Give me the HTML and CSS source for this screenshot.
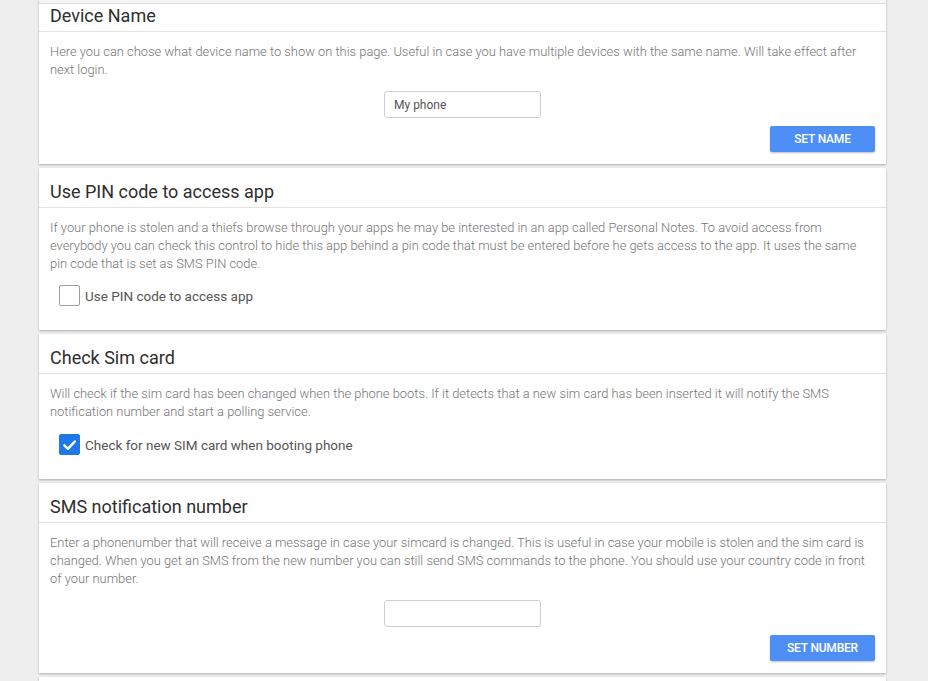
FILE: index.html
```html
<!DOCTYPE html>
<html lang="en">
<head>
<meta charset="utf-8">
<title>Settings</title>
<link rel="stylesheet" href="styles.css">
</head>
<body>
<div class="scroll-edge"></div>
<main class="page">
  <section class="card">
    <h2 class="card-head">Device Name</h2>
    <div class="card-body">
      <p class="desc">Here you can chose what device name to show on this page. Useful in case you have multiple devices with the same name. Will take effect after next login.</p>
      <div class="field-row"><input class="field" type="text" value="My phone"></div>
      <div class="btn-row"><button class="btn">SET NAME</button></div>
    </div>
  </section>

  <section class="card">
    <h2 class="card-head">Use PIN code to access app</h2>
    <div class="card-body check-body">
      <p class="desc">If your phone is stolen and a thiefs browse through your apps he may be interested in an app called Personal Notes. To avoid access from everybody you can check this control to hide this app behind a pin code that must be entered before he gets access to the app. It uses the same pin code that is set as SMS PIN code.</p>
      <label class="check-row"><span class="box"></span><span class="check-label">Use PIN code to access app</span></label>
    </div>
  </section>

  <section class="card">
    <h2 class="card-head">Check Sim card</h2>
    <div class="card-body check-body">
      <p class="desc">Will check if the sim card has been changed when the phone boots. If it detects that a new sim card has been inserted it will notify the SMS notification number and start a polling service.</p>
      <label class="check-row gap14"><span class="box checked"><svg viewBox="0 0 20 20" width="20" height="20"><path d="M4.6 10.4 L8.3 14 L15.6 6.3" fill="none" stroke="#fff" stroke-width="2.6" stroke-linecap="round" stroke-linejoin="round"/></svg></span><span class="check-label">Check for new SIM card when booting phone</span></label>
    </div>
  </section>

  <section class="card">
    <h2 class="card-head">SMS notification number</h2>
    <div class="card-body">
      <p class="desc">Enter a phonenumber that will receive a message in case your simcard is changed. This is useful in case your mobile is stolen and the sim card is changed. When you get an SMS from the new number you can still send SMS commands to the phone. You should use your country code in front of your number.</p>
      <div class="field-row gap12"><input class="field" type="text" value=""></div>
      <div class="btn-row"><button class="btn">SET NUMBER</button></div>
    </div>
  </section>

  <section class="card">
    <h2 class="card-head">&nbsp;</h2>
  </section>
</main>
</body>
</html>
```
FILE: styles.css
```css
html, body {
  margin: 0;
  padding: 0;
  background: #eeeeee;
  font-family: Roboto, "Liberation Sans", Arial, sans-serif;
  overflow: hidden;
}

.scroll-edge {
  position: fixed;
  top: 0;
  left: 39px;
  width: 847px;
  height: 3px;
  background: #f6f6f6;
  border-bottom: 1px solid #dcdcdc;
  z-index: 2;
}

.page {
  display: flex;
  flex-direction: column;
  gap: 4px;
  padding: 0 42px 0 39px;
  margin-top: -8px;
}

.card {
  background: #fff;
  box-shadow: 0 1px 2px rgba(0, 0, 0, 0.28);
}

.card-head {
  margin: 0;
  padding: 13px 11px 4px;
  line-height: 22px;
  font-size: 18px;
  font-weight: 400;
  color: #2e2e2e;
  border-bottom: 1px solid #e3e3e3;
}

.card-body {
  padding: 11px 11px 12px;
}

.check-body {
  padding-bottom: 24px;
}

.desc {
  margin: 0;
  font-size: 12.9px;
  line-height: 18px;
  color: #757575;
  font-weight: 300;
}

.field-row {
  display: flex;
  justify-content: center;
  margin-top: 12px;
}

.field-row.gap12 {
  margin-top: 12px;
}

.field {
  box-sizing: border-box;
  width: 157px;
  height: 27px;
  border: 1px solid #cfcfcf;
  border-radius: 3px;
  padding: 0 9px;
  font-family: Roboto, "Liberation Sans", Arial, sans-serif;
  font-size: 12px;
  color: #555;
  outline: none;
}

.btn-row {
  display: flex;
  justify-content: flex-end;
  margin-top: 8px;
}

.btn {
  width: 105px;
  height: 26px;
  border: 0;
  border-radius: 2px;
  background: #4e8ef7;
  color: #fff;
  font-family: Roboto, "Liberation Sans", Arial, sans-serif;
  font-size: 12px;
  font-weight: 500;
  letter-spacing: -0.2px;
  box-shadow: 0 1px 2px rgba(0, 0, 0, 0.25);
  padding: 0;
}

.check-row {
  display: flex;
  align-items: center;
  gap: 5px;
  margin-top: 12px;
  margin-left: 9px;
}

.check-row.gap14 {
  margin-top: 13px;
}

.box {
  box-sizing: border-box;
  width: 21px;
  height: 21px;
  border: 1px solid #9e9e9e;
  border-radius: 2px;
  background: #fff;
  display: flex;
  align-items: center;
  justify-content: center;
}

.box.checked {
  background: #1e78e8;
  border-color: #1e78e8;
}

.check-label {
  font-size: 13.5px;
  color: #555;
  font-weight: 400;
  line-height: 20px;
}
```
